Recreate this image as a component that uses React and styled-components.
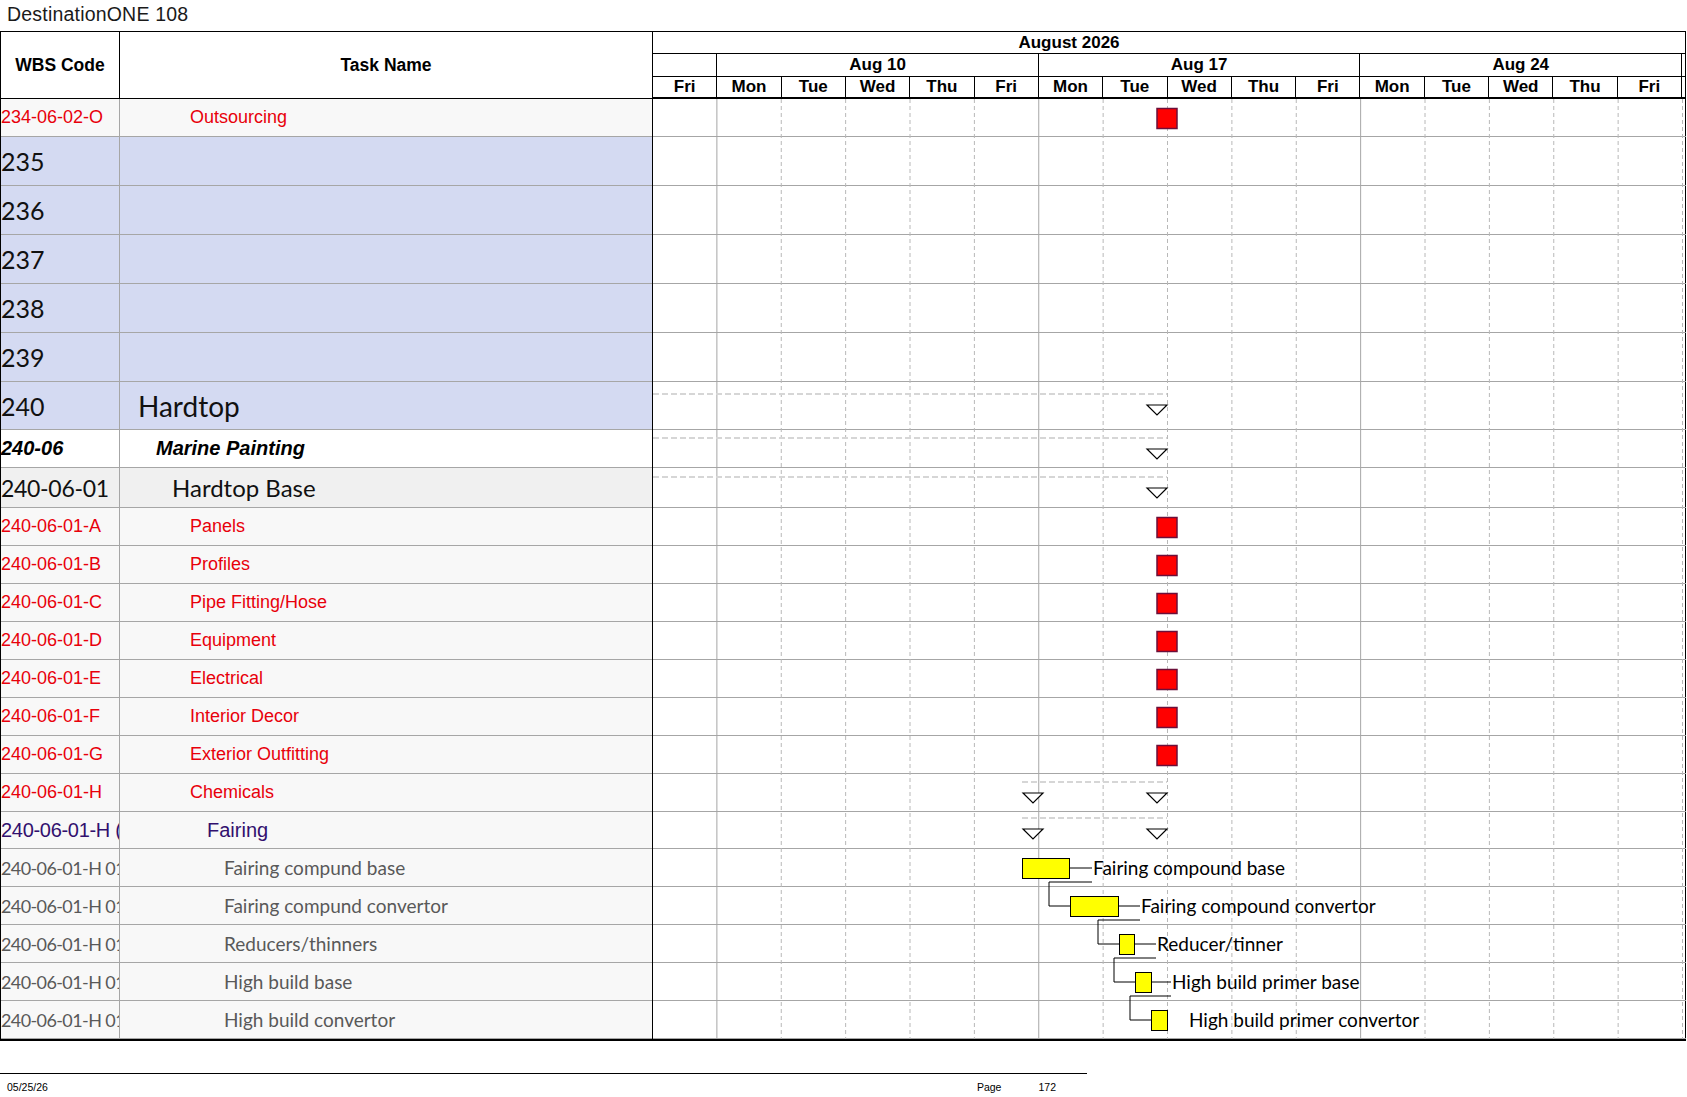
import React from 'react';
import styled, { createGlobalStyle } from 'styled-components';

const ARIAL = '"Liberation Sans", Arial, sans-serif';
const CALIBRI = 'Lato, "Open Sans", sans-serif';
const DAY = 64.375;
const CHART_W = 1033;

const GlobalStyle = createGlobalStyle`
  html, body { margin: 0; background: #fff; }
  body { font-family: ${ARIAL}; color: #000; }
  * { box-sizing: border-box; }
`;

// look of each kind of row in the WBS table
const looks = {
  task: { bg: '#f8f8f8', color: '#e8000b', font: `18px ${ARIAL}`, indent: 70 },
  wbs: { bg: '#d4daf2', color: '#111', font: `25px ${CALIBRI}`, nameFont: `28px ${CALIBRI}`, indent: 18 },
  phase: { bg: '#ffffff', color: '#000', font: `italic bold 20px ${ARIAL}`, indent: 36 },
  group: { bg: '#f0f0f0', color: '#111', font: `24px ${CALIBRI}`, codeFont: `23px ${CALIBRI}`, codeSpacing: -0.3, indent: 52 },
  sub: { bg: '#f8f8f8', color: '#32106e', font: `20px ${ARIAL}`, codeSpacing: -0.3, indent: 87 },
  item: { bg: '#f8f8f8', color: '#595959', font: `19px ${CALIBRI}`, codeFont: `18px ${CALIBRI}`, codeSpacing: -0.6, indent: 104 },
};

const ROWS = [
  { code: '234-06-02-O', name: 'Outsourcing', kind: 'task', h: 38, mark: 'milestone' },
  { code: '235', kind: 'wbs', h: 49 },
  { code: '236', kind: 'wbs', h: 49 },
  { code: '237', kind: 'wbs', h: 49 },
  { code: '238', kind: 'wbs', h: 49 },
  { code: '239', kind: 'wbs', h: 49 },
  { code: '240', name: 'Hardtop', kind: 'wbs', h: 48, mark: 'summary', from: 0, dy: 12 },
  { code: '240-06', name: 'Marine Painting', kind: 'phase', h: 38, mark: 'summary', from: 0 },
  { code: '240-06-01', name: 'Hardtop Base', kind: 'group', h: 40, mark: 'summary', from: 0, dy: 9 },
  { code: '240-06-01-A', name: 'Panels', kind: 'task', h: 38, mark: 'milestone' },
  { code: '240-06-01-B', name: 'Profiles', kind: 'task', h: 38, mark: 'milestone' },
  { code: '240-06-01-C', name: 'Pipe Fitting/Hose', kind: 'task', h: 38, mark: 'milestone' },
  { code: '240-06-01-D', name: 'Equipment', kind: 'task', h: 38, mark: 'milestone' },
  { code: '240-06-01-E', name: 'Electrical', kind: 'task', h: 38, mark: 'milestone' },
  { code: '240-06-01-F', name: 'Interior Decor', kind: 'task', h: 38, mark: 'milestone' },
  { code: '240-06-01-G', name: 'Exterior Outfitting', kind: 'task', h: 38, mark: 'milestone' },
  { code: '240-06-01-H', name: 'Chemicals', kind: 'task', h: 38, mark: 'summary', from: 369, startTri: true },
  { code: '240-06-01-H (Fairing)', name: 'Fairing', kind: 'sub', h: 37, mark: 'summary', from: 369, startTri: true, dy: 6 },
  { code: '240-06-01-H 01', name: 'Fairing compund base', kind: 'item', h: 38, bar: [369, 416], label: 'Fairing compound base', lead: 23 },
  { code: '240-06-01-H 01', name: 'Fairing compund convertor', kind: 'item', h: 38, bar: [417, 465], label: 'Fairing compound convertor', lead: 22 },
  { code: '240-06-01-H 01', name: 'Reducers/thinners', kind: 'item', h: 38, bar: [466, 481], label: 'Reducer/tinner', lead: 22 },
  { code: '240-06-01-H 01', name: 'High build base', kind: 'item', h: 38, bar: [482, 498], label: 'High build primer base', lead: 20 },
  { code: '240-06-01-H 01', name: 'High build convertor', kind: 'item', h: 38, bar: [498, 514], label: 'High build primer convertor', gap: 22 },
];

let acc = 0;
const LAID = ROWS.map((r) => {
  const out = { ...r, top: acc };
  acc += r.h;
  return out;
});
const BODY_H = acc;

const DAYS = ['Fri', 'Mon', 'Tue', 'Wed', 'Thu', 'Fri', 'Mon', 'Tue', 'Wed', 'Thu', 'Fri', 'Mon', 'Tue', 'Wed', 'Thu', 'Fri'];
const WEEKS = [
  { label: '', span: 1 },
  { label: 'Aug 10', span: 5 },
  { label: 'Aug 17', span: 5 },
  { label: 'Aug 24', span: 5 },
];
const WEEK_STARTS = [1, 6, 11];

const MILESTONE_X = 504;
const SUMMARY_END = 514;

const Page = styled.div`
  width: 1687px;
`;

const Title = styled.div`
  height: 31px;
  padding-left: 7px;
  line-height: 29px;
  font-size: 19.5px;
  letter-spacing: 0.2px;
  color: #1a1a1a;
`;

const Sheet = styled.div`
  display: flex;
  width: 1686px;
  border-top: 1px solid #000;
  border-bottom: 2px solid #000;
`;

const LeftPane = styled.div`
  width: 652px;
  border-left: 1px solid #000;
`;

const LeftHeader = styled.div`
  display: grid;
  grid-template-columns: 119px 532px;
  height: 67px;
  border-bottom: 1px solid #000;
`;

const HeadCell = styled.div`
  display: flex;
  align-items: center;
  justify-content: center;
  font: bold 17.5px ${ARIAL};
  border-right: ${(p) => (p.$edge ? '1px solid #000' : 'none')};
`;

const Row = styled.div`
  display: grid;
  grid-template-columns: 119px 532px;
  height: ${(p) => p.$h}px;
  background: ${(p) => looks[p.$kind].bg};
  border-bottom: 1px solid #a6a6a6;
`;

const CodeCell = styled.div`
  display: flex;
  align-items: center;
  overflow: hidden;
  white-space: nowrap;
  border-right: 1px solid #a6a6a6;
  font: ${(p) => looks[p.$kind].codeFont || looks[p.$kind].font};
  letter-spacing: ${(p) => looks[p.$kind].codeSpacing || 0}px;
  color: ${(p) => looks[p.$kind].color};
`;

const NameCell = styled.div`
  display: flex;
  align-items: center;
  padding-left: ${(p) => looks[p.$kind].indent}px;
  white-space: nowrap;
  font: ${(p) => looks[p.$kind].nameFont || looks[p.$kind].font};
  color: ${(p) => looks[p.$kind].color};
`;

const ChartPane = styled.div`
  width: 1034px;
  border-left: 1px solid #000;
  border-right: 1px solid #000;
`;

const ChartHead = styled.div`
  height: 67px;
  display: flex;
  flex-direction: column;
`;

const MonthRow = styled.div`
  display: grid;
  grid-template-columns: 832px 1fr;
  height: 22px;
  border-bottom: 1px solid #000;
`;

const HeadLabel = styled.div`
  display: flex;
  align-items: center;
  justify-content: center;
  font: bold 17px ${ARIAL};
  border-right: ${(p) => (p.$line ? '1px solid #000' : 'none')};
  grid-column: span ${(p) => p.$span || 1};
  overflow: hidden;
  white-space: nowrap;
`;

const TierRow = styled.div`
  display: grid;
  grid-template-columns: repeat(16, 1fr) 3px;
  height: ${(p) => p.$h}px;
  border-bottom: ${(p) => p.$rule}px solid #000;
`;

const Body = styled.svg`
  display: block;
`;

const BarLabel = styled.text`
  font: 19px ${CALIBRI};
  fill: #000;
`;

const Footer = styled.div`
  display: flex;
  align-items: flex-start;
  width: 1087px;
  margin-top: 32px;
  padding: 7px 31px 0 7px;
  border-top: 1px solid #000;
  font: 10.5px "Liberation Sans Narrow", ${ARIAL};
  color: #000;
`;

const FooterSpacer = styled.div`
  flex: 1;
`;

const FooterPage = styled.span`
  margin-right: 37px;
`;

function Marks({ r, next }) {
  const { top } = r;
  if (r.mark === 'milestone') {
    return (
      <rect x={MILESTONE_X} y={top + 9.5} width={20} height={20} fill="#ff0000" stroke="#6b0f3a" strokeWidth={1.5} />
    );
  }
  if (r.mark === 'summary') {
    const dy = r.dy ?? 8;
    const t = top + dy + 11;
    const tri = (cx) => `${cx - 10},${t} ${cx + 10},${t} ${cx},${t + 10}`;
    return (
      <g>
        <line x1={r.from} x2={SUMMARY_END} y1={top + dy} y2={top + dy} stroke="#d6d6d6" strokeWidth={2} strokeDasharray="6 3" />
        {r.startTri && <polygon points={tri(r.from + 11)} fill="#fff" stroke="#000" strokeWidth={1.2} />}
        <polygon points={tri(SUMMARY_END - 10)} fill="#fff" stroke="#000" strokeWidth={1.2} />
      </g>
    );
  }
  if (r.bar) {
    const [x0, x1] = r.bar;
    const cy = top + 19;
    const leadEnd = x1 + (r.lead || 0);
    const textX = r.lead ? leadEnd + 1 : x1 + r.gap;
    return (
      <g>
        {next && next.bar && (
          <polyline
            points={`${leadEnd},${top + 33} ${next.bar[0] - 21},${top + 33} ${next.bar[0] - 21},${next.top + 19} ${next.bar[0]},${next.top + 19}`}
            fill="none"
            stroke="#000"
            strokeWidth={1}
          />
        )}
        {r.lead && <line x1={x1} x2={leadEnd} y1={cy} y2={cy} stroke="#000" strokeWidth={1} />}
        <rect x={x0 + 0.5} y={top + 9.5} width={x1 - x0} height={20} fill="#ffff00" stroke="#000" strokeWidth={1} />
        <BarLabel x={textX} y={cy + 7}>{r.label}</BarLabel>
      </g>
    );
  }
  return null;
}

function ChartBody() {
  return (
    <Body width={CHART_W} height={BODY_H} viewBox={`0 0 ${CHART_W} ${BODY_H}`}>
      {LAID.map((r, i) => (
        <line key={`r${i}`} x1={0} x2={CHART_W} y1={r.top + r.h - 0.5} y2={r.top + r.h - 0.5} stroke="#a6a6a6" />
      ))}
      {DAYS.map((d, i) => {
        const x = (i + 1) * DAY - 0.5;
        const week = WEEK_STARTS.includes(i + 1);
        return (
          <line
            key={`d${i}`}
            x1={x}
            x2={x}
            y1={0}
            y2={BODY_H}
            stroke={week ? '#a6a6a6' : '#b8b8b8'}
            strokeDasharray={week ? undefined : '4 3'}
          />
        );
      })}
      {LAID.map((r, i) => (
        <Marks key={`m${i}`} r={r} next={LAID[i + 1]} />
      ))}
    </Body>
  );
}

export default function App() {
  return (
    <Page>
      <GlobalStyle />
      <Title>DestinationONE 108</Title>
      <Sheet>
        <LeftPane>
          <LeftHeader>
            <HeadCell $edge>WBS Code</HeadCell>
            <HeadCell>Task Name</HeadCell>
          </LeftHeader>
          {ROWS.map((r, i) => (
            <Row key={i} $h={r.h} $kind={r.kind}>
              <CodeCell $kind={r.kind}>{r.code}</CodeCell>
              <NameCell $kind={r.kind}>{r.name}</NameCell>
            </Row>
          ))}
        </LeftPane>
        <ChartPane>
          <ChartHead>
            <MonthRow>
              <HeadLabel>August 2026</HeadLabel>
              <HeadLabel />
            </MonthRow>
            <TierRow $h={23} $rule={1}>
              {WEEKS.map((w, i) => (
                <HeadLabel key={i} $span={w.span} $line>
                  {w.label}
                </HeadLabel>
              ))}
              <HeadLabel />
            </TierRow>
            <TierRow $h={22} $rule={2}>
              {DAYS.map((d, i) => (
                <HeadLabel key={i} $line>
                  {d}
                </HeadLabel>
              ))}
              <HeadLabel />
            </TierRow>
          </ChartHead>
          <ChartBody />
        </ChartPane>
      </Sheet>
      <Footer>
        <span>05/25/26</span>
        <FooterSpacer />
        <FooterPage>Page</FooterPage>
        <span>172</span>
      </Footer>
    </Page>
  );
}
